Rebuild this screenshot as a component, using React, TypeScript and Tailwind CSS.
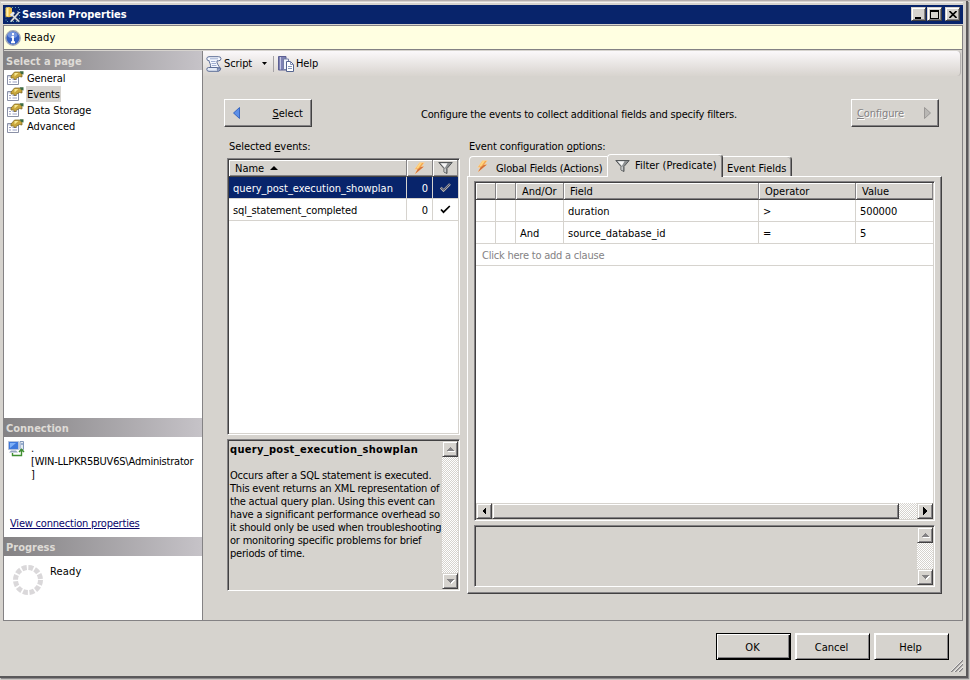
import React from "react";

const raised =
  "bg-[#d6d3ce] border border-t-[#d6d3ce] border-l-[#d6d3ce] border-r-[#424142] border-b-[#424142] shadow-[inset_1px_1px_0_#fff,inset_-1px_-1px_0_#848284]";
const raisedButton =
  "bg-[#d6d3ce] border border-t-white border-l-white border-r-[#424142] border-b-[#424142] shadow-[inset_-1px_-1px_0_#848284]";
const sunken =
  "border border-t-[#848284] border-l-[#848284] border-r-white border-b-white shadow-[inset_1px_1px_0_#424142,inset_-1px_-1px_0_#d6d3ce] p-px";
const dither =
  "bg-[repeating-conic-gradient(#fff_0_25%,#d6d3ce_0_50%)] bg-[length:2px_2px]";

const pages = ["General", "Events", "Data Storage", "Advanced"];

const events = [
  { name: "query_post_execution_showplan", actions: 0, selected: true },
  { name: "sql_statement_completed", actions: 0, selected: false },
];

const clauses = [
  { join: "", field: "duration", op: ">", value: "500000" },
  { join: "And", field: "source_database_id", op: "=", value: "5" },
];

const description = [
  "Occurs after a SQL statement is executed.",
  "This event returns an XML representation of",
  "the actual query plan. Using this event can",
  "have a significant performance overhead so",
  "it should only be used when troubleshooting",
  "or monitoring specific problems for brief",
  "periods of time.",
];

const Arrow = ({ dir, color }: { dir: string; color: string }) => {
  const shapes: Record<string, string> = {
    up: "M0 6h8L4 2z",
    down: "M0 2h8L4 6z",
    left: "M6 0v8L2 4z",
    right: "M2 0v8l4-4z",
  };
  return (
    <svg width="9" height="9" viewBox="0 0 9 9" shapeRendering="crispEdges">
      {color !== "#000" && <path d={shapes[dir]} fill="#fff" transform="translate(1 1)" />}
      <path d={shapes[dir]} fill={color} />
    </svg>
  );
};

const ScrollButton = ({ dir, color = "#848284" }: { dir: string; color?: string }) => (
  <div className={`flex h-4 w-4 shrink-0 items-center justify-center ${raised}`}>
    <Arrow dir={dir} color={color} />
  </div>
);

const VScroll = () => (
  <div className={`flex w-4 shrink-0 flex-col justify-between ${dither}`}>
    <ScrollButton dir="up" />
    <ScrollButton dir="down" />
  </div>
);

const Bolt = () => (
  <svg width="13" height="13" viewBox="0 0 13 13">
    <path d="M6.500.5h5L8.500 4.500H11L2 12l2.500-4.500h-3z" fill="#f3a650" stroke="#f8dcae" strokeWidth=".6" />
    <path d="M11 4.500L2 12l2.500-4.500L8 5z" fill="#d2703c" />
    <path d="M6.500 1L3 6.500h2L9 1z" fill="#ffd680" />
  </svg>
);

const Funnel = () => (
  <svg width="15" height="14" viewBox="0 0 15 14">
    <path d="M.8 1.500h13.400L9 7.500v5L6 11V7.500z" fill="#8d9092" stroke="#55585a" />
    <path d="M2.500 2.300h7L6.800 7z" fill="#f6f6f6" />
    <path d="M6.500 7.500h1.200v4l-1.200-.5z" fill="#e2e2e2" />
  </svg>
);

const Check = () => (
  <svg width="11" height="9" viewBox="0 0 11 9">
    <path d="M1 4.500l2.500 2.700L9.800 1" fill="none" stroke="#000" strokeWidth="1.700" />
  </svg>
);

// the selected row inverts the mark, leaving only its outline
const CheckOutline = () => (
  <svg width="11" height="9" viewBox="0 0 11 9">
    <path d="M.8 4.500l2.700 3L10 1" fill="none" stroke="#bdb8ae" strokeWidth="2.400" />
    <path d="M1 4.500l2.500 2.700L9.800 1" fill="none" stroke="#28305a" strokeWidth="1" />
  </svg>
);

const PageIcon = () => (
  <svg width="17" height="14" viewBox="0 0 17 14">
    <path d="M.5 4.500h11v9H.5z" fill="#fff" stroke="#8a90a6" />
    <path d="M1 5h10v1.500H1z" fill="#d0d4e2" />
    <path d="M2 8.500h2M2 11h2M5.500 8.500h4.500M5.500 11H10" stroke="#9a9fc4" />
    <path d="M4 5l3.500-4H12l3 1.500V6l-2.500-.5-3.500 2-1 1.500-1.500-2H4z" fill="#c9a63c" stroke="#76601c" strokeWidth=".7" />
    <path d="M7.500 2h4L7.500 5.500z" fill="#f8e98f" />
    <path d="M12.500.3h4v3.200L14 2.800z" fill="#3d6b42" />
  </svg>
);

const SessionIcon = () => (
  <svg width="17" height="17" viewBox="0 0 17 17" className="shrink-0">
    <path d="M1 1.500h13.500v14H1z" fill="none" stroke="#5fa3b5" strokeDasharray="1 2" />
    <path d="M.5 2q3-2 6.500 0v8.500q-3.500 1.500-6.500 0z" fill="#f0bf45" />
    <path d="M1.500 2.500q1-1 2-1v9l-2-.5z" fill="#fff0a8" />
    <path d="M6 8l8 7.500M13.500 7L6 15.500" stroke="#5a606c" strokeWidth="2.400" />
    <path d="M6 8l8 7.500M13.500 7L6 15.500" stroke="#dde0e6" strokeWidth="1.400" />
    <path d="M4.500 9L8 5.500 10 7l-3 3.500zM12 5l1.500 2L16 7" fill="#e9eaec" />
  </svg>
);

const InfoIcon = () => (
  <svg width="16" height="16" viewBox="0 0 16 16">
    <circle cx="8" cy="8" r="7.200" fill="#3560c4" stroke="#a2a9b8" strokeWidth="1.400" />
    <ellipse cx="7.500" cy="5" rx="5" ry="3.200" fill="#7395de" />
    <path d="M8 3v2.200M6.500 7H8v5M6 12.200h4" fill="none" stroke="#fff" strokeWidth="1.900" />
  </svg>
);

const ScriptIcon = () => (
  <svg width="16" height="16" viewBox="0 0 16 16">
    <path d="M3 .7h9.500q2.500 0 2.500 2t-2.500 2.100H11q-.5 2 1 4t1.500 3.200h-9Q5 9.500 4 7.500T3.300 4.800Q.8 4.800.8 2.800T3 .7z" fill="#f5f8ff" stroke="#5c6d96" />
    <path d="M2.500 11.500h9q-.8 1.700.8 3.800H3q-2.200 0-2.200-1.900t1.700-1.900z" fill="#e4eaf7" stroke="#5c6d96" />
    <path d="M12.300 15.300q2.500-.4 2.500-3.300h-3.300" fill="#93a4cc" stroke="#5c6d96" />
    <path d="M5 5.500h4.500M5.500 7.500H10M6 9.500h4.500M4 2.800h8" stroke="#9fadd0" />
  </svg>
);

const HelpIcon = () => (
  <svg width="16" height="16" viewBox="0 0 16 16">
    <path d="M.5.500h7.500v13.500H.5z" fill="#7f82b4" stroke="#5b5e92" />
    <path d="M2.500 1v12.500" stroke="#c3c6e2" />
    <path d="M5.500 3h5v10.500h-5z" fill="#f4f6fc" stroke="#7580a6" />
    <path d="M8.500 5.500h4l3 3v7h-7z" fill="#fff" stroke="#566590" />
    <path d="M12.500 5.500v3h3M10 10.500h4M10 12.500h4" fill="none" stroke="#8795b8" />
  </svg>
);

const ServerIcon = () => (
  <svg width="17" height="16" viewBox="0 0 17 16" className="shrink-0">
    <path d="M.5.500h10v8H.5z" fill="#3f78dc" stroke="#b4c2dc" />
    <path d="M2 2h6L2 7z" fill="#7fb0f8" />
    <path d="M3 9.500h5l2 2H1z" fill="#98a6c0" />
    <path d="M12 .5h3.500v8H12z" fill="#e2e9f2" stroke="#8298ba" />
    <path d="M13 3h2" stroke="#5377b0" />
    <path d="M4.500 12v2.500h9V9M11 11l2.500-2.700L16 11" fill="none" stroke="#3f8f30" strokeWidth="1.400" />
  </svg>
);

const Spinner = () => (
  <svg width="32" height="32" viewBox="0 0 32 32">
    <circle cx="16" cy="16" r="12.500" fill="none" stroke="#dad8da" strokeWidth="5" strokeDasharray="4.900 1.645" />
  </svg>
);

const SideHeader = ({ children }: { children: React.ReactNode }) => (
  <div className="h-[19px] shrink-0 bg-linear-to-r from-[#848284] to-[#c6c3c8] pl-[2px] text-[11px] leading-[21px] font-bold text-[#dedbd6]">
    {children}
  </div>
);

const HeadCell = ({ className, children }: { className: string; children?: React.ReactNode }) => (
  <div
    className={`flex h-full shrink-0 items-center border-r border-b border-r-[#848284] border-b-[#424142] shadow-[inset_1px_1px_0_#fff,inset_0_-1px_0_#848284] ${className}`}
  >
    {children}
  </div>
);

const Cell = ({ className, children }: { className: string; children?: React.ReactNode }) => (
  <div className={`flex h-full shrink-0 items-center border-r border-[#d6d3ce] pt-[2px] ${className}`}>
    {children}
  </div>
);

const DialogButton = ({ label, primary }: { label: string; primary?: boolean }) => (
  <button
    className={`h-[27px] w-[75px] border bg-[#d6d3ce] pt-px pr-[2px] text-center ${
      primary
        ? "border-black shadow-[inset_1px_1px_0_#fff,inset_-1px_-1px_0_#000,inset_-2px_-2px_0_#848284]"
        : "border-t-white border-l-white border-r-black border-b-black shadow-[inset_1px_1px_0_#fff,inset_-1px_-1px_0_#848284]"
    }`}
  >
    {label}
  </button>
);

const App: React.FC = () => {
  return (
    <div className="flex h-[680px] w-[970px] flex-col overflow-hidden border-t border-[#b5aeae] bg-[#d6d3ce] font-['DejaVu_Sans_Condensed','DejaVu_Sans',sans-serif] text-[11px] leading-[13px] text-black">
      <div className="flex h-[677px] w-[968px] flex-col border-r-2 border-b-2 border-[#5a585a] pr-[3px] pl-[3px] shadow-[1px_1px_1px_#8c8a8c]">
        <div className="mt-px mb-[2px] -ml-[2px] h-px shrink-0 bg-[#f4f2f0]" />
        {/* title bar */}
        <div className="flex h-[19px] shrink-0 items-center bg-[#08246b] pr-[3px] pl-[2px] text-white">
          <SessionIcon />
          <span className="-mt-px text-[11px] font-bold">Session Properties</span>
          <div className="-mt-px ml-auto flex">
            <div className={`flex h-[14px] w-[15px] items-end pb-px pl-[3px] ${raised}`}>
              <div className="h-[2px] w-[6px] bg-black" />
            </div>
            <div className={`ml-px flex h-[14px] w-[15px] items-center justify-center ${raised}`}>
              <div className="h-[9px] w-[9px] border border-t-2 border-black" />
            </div>
            <div className={`ml-[3px] flex h-[14px] w-[15px] items-center justify-center ${raised}`}>
              <svg width="8" height="7" viewBox="0 0 8 7">
                <path d="M.5 0l7 7M7.500 0l-7 7" stroke="#000" strokeWidth="1.600" />
              </svg>
            </div>
          </div>
        </div>

        <div className="mt-px flex h-[25px] shrink-0 items-center border border-[#848284] bg-[#ffffe1] pl-[1px]">
          <InfoIcon />
          <span className="ml-[3px] tracking-[0.15px]">Ready</span>
        </div>

        <div className="flex h-[571px] shrink-0 border border-t-0 border-[#848284] pt-px">
          {/* sidebar */}
          <div className="flex w-[199px] shrink-0 flex-col border-r border-[#848284] bg-white">
            <SideHeader>Select a page</SideHeader>
            <div className="flex h-[348px] shrink-0 flex-col">
              {pages.map((page) => (
                <div key={page} className="flex h-4 items-center pl-[3px]">
                  <PageIcon />
                  <span
                    className={`ml-[2px] h-4 px-[1px] leading-[17px] tracking-[-0.1px] ${
                      page === "Events" ? "bg-[#d6d3ce]" : ""
                    }`}
                  >
                    {page}
                  </span>
                </div>
              ))}
            </div>
            <SideHeader>Connection</SideHeader>
            <div className="flex h-[100px] shrink-0 flex-col">
              <div className="flex pt-[4px] pl-[4px]">
                <ServerIcon />
                <div className="ml-[6px] pt-px tracking-[-0.2px]">
                  <div>.</div>
                  <div>[WIN-LLPKR5BUV6S\Administrator</div>
                  <div>]</div>
                </div>
              </div>
              <a className="mt-auto mb-[7px] ml-[6px] tracking-[-0.2px] text-[#08046b] underline">
                View connection properties
              </a>
            </div>
            <SideHeader>Progress</SideHeader>
            <div className="flex pt-[8px] pl-[8px]">
              <Spinner />
              <span className="ml-[6px] pt-px tracking-[0.15px]">Ready</span>
            </div>
          </div>

          {/* main area */}
          <div className="flex flex-1 flex-col">
            <div className="mr-px flex h-[25px] shrink-0 items-center rounded-r-sm border-r border-[#b5b2b0] bg-linear-to-b from-[#fbf8fa] to-[#d8d4cf] pl-[3px]">
              <ScriptIcon />
              <span className="ml-[2px] w-[38px] tracking-[-0.1px]">Script</span>
              <svg width="5" height="3" viewBox="0 0 5 3">
                <path d="M0 0h5L2.500 3z" />
              </svg>
              <div className="ml-[6px] h-4 w-px bg-[#a5a2a5]" />
              <div className="ml-[4px] flex items-center">
                <HelpIcon />
                <span className="ml-[2px] tracking-[-0.1px]">Help</span>
              </div>
            </div>

            <div className="mt-[23px] flex h-[28px] shrink-0 items-center pr-[23px] pl-[21px]">
              <div className={`flex h-[28px] w-[88px] items-center pr-[8px] pl-[8px] ${raisedButton}`}>
                <svg width="7" height="12" viewBox="0 0 7 12">
                  <path d="M6.500.5v11L.5 6z" fill="#5c8fe8" stroke="#2456b8" strokeWidth=".8" />
                </svg>
                <span className="ml-auto">
                  <u>S</u>elect
                </span>
              </div>
              <span className="ml-[109px] pt-[2px] tracking-[-0.18px] whitespace-nowrap">
                Configure the events to collect additional fields and specify filters.
              </span>
              <div
                className={`ml-auto flex h-[28px] w-[88px] items-center pr-[7px] pl-[5px] text-[#848284] [text-shadow:1px_1px_0_#fff] ${raisedButton}`}
              >
                <span className="tracking-[-0.1px]">
                  <u>C</u>onfigure
                </span>
                <svg className="ml-auto" width="7" height="12" viewBox="0 0 7 12">
                  <path d="M.5.5v11l6-5.500z" fill="#b9b7b4" stroke="#8f8d8b" strokeWidth=".8" />
                </svg>
              </div>
            </div>

            <div className="flex">
              <div className="ml-[24px] flex w-[233px] shrink-0 flex-col">
                <div className="flex h-[31px] items-center pt-[7px] pl-[2px]">
                  <span className="tracking-[-0.08px]">
                    Selected <u>e</u>vents:
                  </span>
                </div>
                <div className={`flex h-[277px] flex-col bg-white ${sunken}`}>
                  <div className="flex h-[17px] shrink-0 bg-[#d6d3ce]">
                    <HeadCell className="w-[178px] pl-[6px]">
                      Name
                      <svg className="ml-[6px]" width="8" height="4" viewBox="0 0 8 4">
                        <path d="M0 4h8L4 0z" />
                      </svg>
                    </HeadCell>
                    <HeadCell className="w-[26px] justify-center">
                      <Bolt />
                    </HeadCell>
                    <HeadCell className="w-[25px] justify-center">
                      <Funnel />
                    </HeadCell>
                  </div>
                  {events.map((ev) => (
                    <div
                      key={ev.name}
                      className={`flex h-[22px] shrink-0 border-b border-[#d6d3ce] ${
                        ev.selected ? "bg-[#08246b] text-white" : ""
                      }`}
                    >
                      <Cell className={`w-[178px] pl-[4px] ${ev.selected ? "" : "tracking-[-0.15px]"}`}>
                        {ev.name}
                      </Cell>
                      <Cell className="w-[26px] justify-end pr-[4px]">{ev.actions}</Cell>
                      <div className="flex flex-1 items-center justify-center">
                        {ev.selected ? <CheckOutline /> : <Check />}
                      </div>
                    </div>
                  ))}
                </div>
                <div className={`mt-[4px] flex h-[152px] ${sunken}`}>
                  <div className="w-[213px] shrink-0 pt-[2px] pl-px whitespace-nowrap">
                    <div className="mb-[13px] tracking-[0.3px] font-bold">query_post_execution_showplan</div>
                    {description.map((line) => (
                      <div key={line} className="tracking-[-0.2px]">
                        {line}
                      </div>
                    ))}
                  </div>
                  <VScroll />
                </div>
              </div>

              <div className="ml-[7px] flex w-[475px] shrink-0 flex-col">
                <div className="flex h-[27px] items-center pt-[11px] pl-[2px]">
                  <span className="tracking-[-0.13px]">
                    Event configuration <u>o</u>ptions:
                  </span>
                </div>
                {/* tabs */}
                <div className="flex h-[22px] shrink-0 items-end pl-[2px]">
                  <div className="flex h-[20px] w-[138px] items-center rounded-tl-sm border-t border-l border-white pl-[6px]">
                    <Bolt />
                    <span className="ml-[7px] pt-[3px] tracking-[-0.14px] whitespace-nowrap">
                      Global Fields (Actions)
                    </span>
                  </div>
                  <div className="z-10 -mb-px flex h-[23px] w-[116px] items-center rounded-t-sm border-t border-r border-l border-t-white border-r-[#424142] border-l-white bg-[#d6d3ce] pb-px pl-[7px] shadow-[inset_-1px_0_0_#848284]">
                    <Funnel />
                    <span className="ml-[5px] whitespace-nowrap">Filter (Predicate)</span>
                  </div>
                  <div className="flex h-[20px] w-[69px] items-center rounded-tr-sm border-t border-r border-t-white border-r-[#424142] pt-[3px] pl-[4px] whitespace-nowrap shadow-[inset_-1px_0_0_#848284]">
                    Event Fields
                  </div>
                </div>
                <div className="flex h-[418px] flex-col border border-t-white border-r-[#424142] border-b-[#424142] border-l-white px-[6px] pt-[4px] shadow-[inset_-1px_-1px_0_#848284]">
                  <div className={`flex h-[340px] w-[461px] shrink-0 flex-col bg-white ${sunken}`}>
                    <div className="flex h-[17px] shrink-0 bg-[#d6d3ce]">
                      <HeadCell className="w-[20px]" />
                      <HeadCell className="w-[20px]" />
                      <HeadCell className="w-[48px] pl-[6px]">And/Or</HeadCell>
                      <HeadCell className="w-[195px] pl-[6px]">Field</HeadCell>
                      <HeadCell className="w-[97px] pl-[6px]">Operator</HeadCell>
                      <HeadCell className="w-[77px] pl-[6px]">Value</HeadCell>
                    </div>
                    {clauses.map((c) => (
                      <div key={c.field} className="flex h-[22px] shrink-0 border-b border-[#d6d3ce]">
                        <Cell className="w-[20px]" />
                        <Cell className="w-[20px]" />
                        <Cell className="w-[48px] pl-[4px]">{c.join}</Cell>
                        <Cell className="w-[195px] pl-[4px]">{c.field}</Cell>
                        <Cell className="w-[97px] pl-[4px]">{c.op}</Cell>
                        <div className="flex items-center pt-[2px] pl-[4px] tracking-[-0.1px]">{c.value}</div>
                      </div>
                    ))}
                    <div className="flex h-[22px] shrink-0 items-center border-b border-[#d6d3ce] pt-[2px] pl-[6px] tracking-[-0.22px] text-[#848284]">
                      Click here to add a clause
                    </div>
                    <div className={`mt-auto flex h-4 shrink-0 ${dither}`}>
                      <ScrollButton dir="left" color="#000" />
                      <div className={`h-4 w-[407px] ${raised}`} />
                      <div className="ml-auto">
                        <ScrollButton dir="right" color="#000" />
                      </div>
                    </div>
                  </div>
                  <div className={`mt-[4px] flex h-[62px] w-[461px] shrink-0 justify-end ${sunken}`}>
                    <VScroll />
                  </div>
                </div>
              </div>
            </div>
          </div>
        </div>

        {/* dialog buttons */}
        <div className="flex shrink-0 items-start justify-end gap-[4px] pt-[12px]">
          <DialogButton label="OK" primary />
          <DialogButton label="Cancel" />
          <DialogButton label="Help" />
          <svg className="mt-[27px] -ml-[2px]" width="12" height="12" viewBox="0 0 12 12">
            <path d="M0 12L12 0M4 12l8-8M8 12l4-4" stroke="#848284" strokeWidth="1.500" />
            <path d="M-1 12L11 0M3 12l9-9M7 12l5-5" stroke="#fff" strokeWidth=".7" />
          </svg>
        </div>
      </div>
    </div>
  );
};

export default App;
